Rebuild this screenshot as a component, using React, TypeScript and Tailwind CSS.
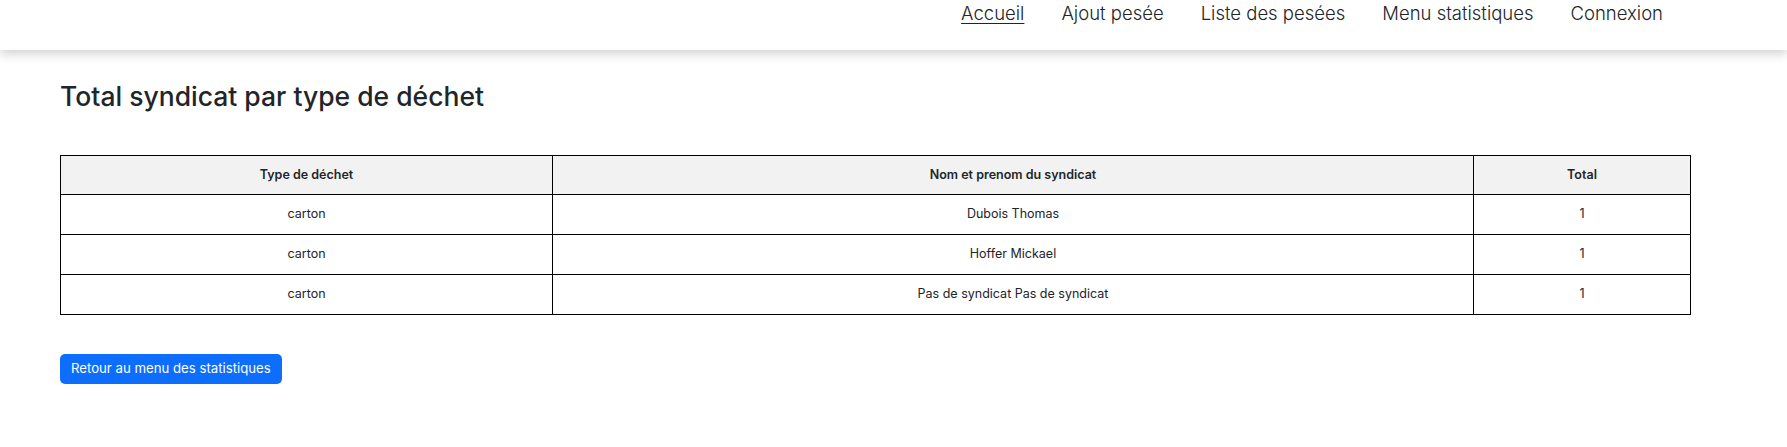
import React from 'react';

const links = ['Accueil', 'Ajout pesée', 'Liste des pesées', 'Menu statistiques', 'Connexion'];

const rows = [
  { type: 'carton', nom: 'Dubois Thomas', total: 1 },
  { type: 'carton', nom: 'Hoffer Mickael', total: 1 },
  { type: 'carton', nom: 'Pas de syndicat Pas de syndicat', total: 1 },
];

const App: React.FC = () => {
  return (
    <div className="min-h-[447px] bg-white text-[#212529] font-['Inter',sans-serif]">
      {/* Navbar */}
      <nav className="relative z-10 h-[50px] bg-white shadow-[0_4px_10px_rgba(0,0,0,0.18)] flex justify-end pr-[124px]">
        <ul className="flex gap-[37px] pt-[1px] text-[18.5px] font-light leading-[24px]">
          {links.map((l, i) => (
            <li key={l}>
              <a href="#" className={i === 0 ? 'underline underline-offset-[3px] decoration-1' : ''}>
                {l}
              </a>
            </li>
          ))}
        </ul>
      </nav>

      <main className="pl-[60px] pr-[96px]">
        <h1 className="pt-[31px] text-[26.5px] font-medium leading-[30px]">Total syndicat par type de déchet</h1>

        <table className="mt-[44px] w-full table-fixed border-collapse border border-black text-[12.5px]">
          <thead>
            <tr className="h-[39px] bg-[#f2f2f2]">
              <th className="w-[492px] border border-black font-semibold">Type de déchet</th>
              <th className="w-[921px] border border-black font-semibold">Nom et prenom du syndicat</th>
              <th className="border border-black font-semibold">Total</th>
            </tr>
          </thead>
          <tbody>
            {rows.map((r, i) => (
              <tr key={i} className="h-[40px]">
                <td className="border border-black text-center">{r.type}</td>
                <td className="border border-black text-center">{r.nom}</td>
                <td className="border border-black text-center">{r.total}</td>
              </tr>
            ))}
          </tbody>
        </table>

        <button className="mt-[39px] h-[30px] rounded-[5px] bg-[#0d6efd] px-[11px] text-[13.2px] text-white">
          Retour au menu des statistiques
        </button>
      </main>
    </div>
  );
};

export default App;
